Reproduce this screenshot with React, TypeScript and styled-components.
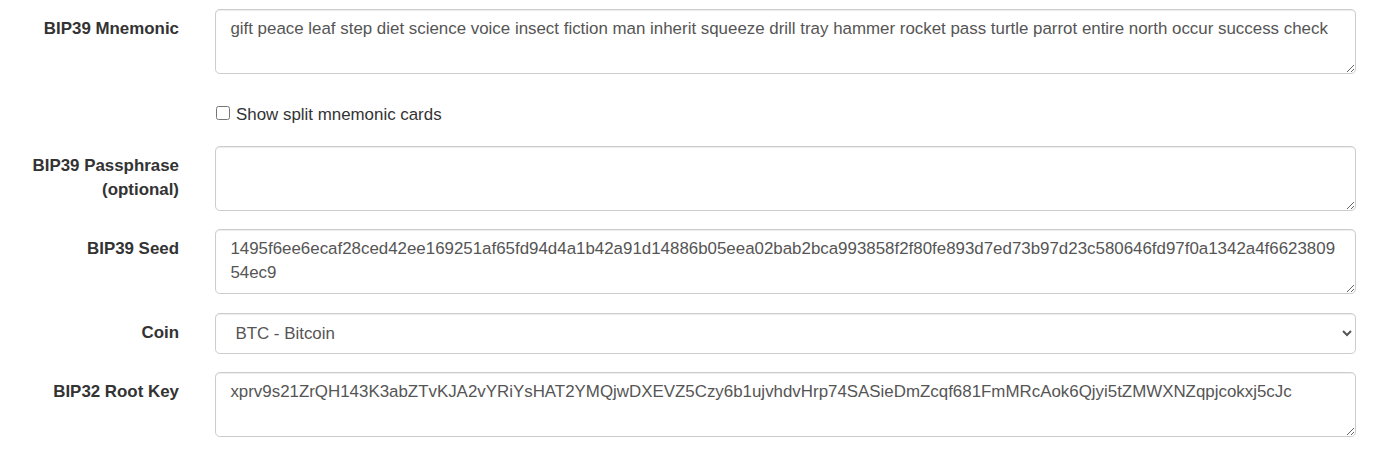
import React, { useState } from "react";
import styled, { createGlobalStyle } from "styled-components";

const GlobalStyle = createGlobalStyle`
  html, body {
    margin: 0;
    padding: 0;
    background: #fff;
  }
  body {
    font-family: "Liberation Sans", Arial, Helvetica, sans-serif;
    font-size: 16.9px;
    line-height: 24px;
    color: #333;
  }
  * {
    box-sizing: border-box;
  }
`;

const Form = styled.form`
  padding-top: 9px;
  width: 1374px;
`;

const Row = styled.div<{ $mb?: number }>`
  display: grid;
  grid-template-columns: 197px 1fr;
  margin-bottom: ${(p) => (p.$mb ?? 18)}px;
`;

const Label = styled.label`
  text-align: right;
  font-weight: bold;
  color: #333;
  padding: 8.4px 18px 0 18px;
`;

const Cell = styled.div`
  padding: 0 18px;
`;

const TextArea = styled.textarea`
  display: block;
  width: 100%;
  height: 65px;
  padding: 7.2px 14.4px;
  border: 1px solid #ccc;
  border-radius: 4.8px;
  box-shadow: inset 0 1px 1px rgba(0, 0, 0, 0.075);
  font: inherit;
  line-height: 24px;
  color: #555;
  background: #fff;
  resize: vertical;
  outline: none;
`;

const Select = styled.select`
  display: block;
  width: 100%;
  height: 41px;
  padding: 7.2px 14.4px 7.2px 15.4px;
  border: 1px solid #ccc;
  border-radius: 4.8px;
  box-shadow: inset 0 1px 1px rgba(0, 0, 0, 0.075);
  font: inherit;
  color: #555;
  background: #fff;
  outline: none;
`;

const CheckRow = styled.label`
  display: flex;
  align-items: flex-start;
  gap: 6px;
  min-height: 36px;
  padding-top: 11px;
  font-weight: normal;
  color: #333;
  cursor: pointer;
`;

const Check = styled.input`
  width: 14px;
  height: 14px;
  margin: 3px 0 0 1px;
`;

const mnemonic =
  "gift peace leaf step diet science voice insect fiction man inherit squeeze drill tray hammer rocket pass turtle parrot entire north occur success check";
const seed =
  "1495f6ee6ecaf28ced42ee169251af65fd94d4a1b42a91d14886b05eea02bab2bca993858f2f80fe893d7ed73b97d23c580646fd97f0a1342a4f662380954ec9";
const rootKey =
  "xprv9s21ZrQH143K3abZTvKJA2vYRiYsHAT2YMQjwDXEVZ5Czy6b1ujvhdvHrp74SASieDmZcqf681FmMRcAok6Qjyi5tZMWXNZqpjcokxj5cJc";

const App = () => {
  const [phrase, setPhrase] = useState(mnemonic);
  const [pass, setPass] = useState("");
  const [split, setSplit] = useState(false);
  const [coin, setCoin] = useState("btc");

  return (
    <>
      <GlobalStyle />
      <Form onSubmit={(e) => e.preventDefault()}>
        <Row>
          <Label>BIP39 Mnemonic</Label>
          <Cell>
            <TextArea value={phrase} onChange={(e) => setPhrase(e.target.value)} />
          </Cell>
        </Row>
        <Row>
          <div />
          <Cell>
            <CheckRow>
              <Check type="checkbox" checked={split} onChange={(e) => setSplit(e.target.checked)} />
              <span>Show split mnemonic cards</span>
            </CheckRow>
          </Cell>
        </Row>
        <Row>
          <Label>
            BIP39 Passphrase
            <br />
            (optional)
          </Label>
          <Cell>
            <TextArea value={pass} onChange={(e) => setPass(e.target.value)} />
          </Cell>
        </Row>
        <Row $mb={19}>
          <Label>BIP39 Seed</Label>
          <Cell>
            <TextArea value={seed} readOnly />
          </Cell>
        </Row>
        <Row>
          <Label>Coin</Label>
          <Cell>
            <Select value={coin} onChange={(e) => setCoin(e.target.value)}>
              <option value="btc">BTC - Bitcoin</option>
              <option value="btct">BTC - Bitcoin Testnet</option>
              <option value="ltc">LTC - Litecoin</option>
            </Select>
          </Cell>
        </Row>
        <Row>
          <Label>BIP32 Root Key</Label>
          <Cell>
            <TextArea value={rootKey} readOnly />
          </Cell>
        </Row>
      </Form>
    </>
  );
};

export default App;
